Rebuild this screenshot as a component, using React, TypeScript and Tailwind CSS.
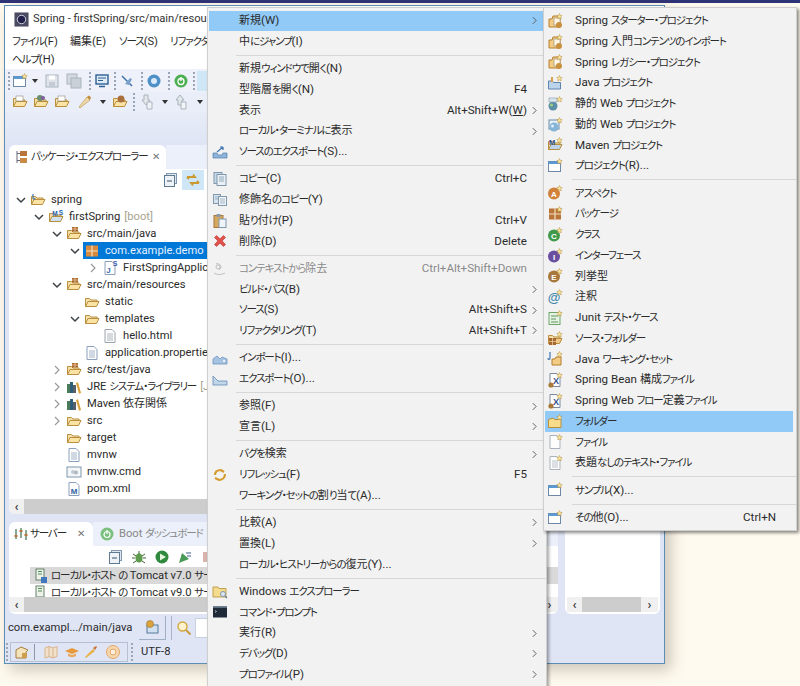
import React from "react";

const FONT = "font-['Roboto','Noto_Sans_CJK_JP',sans-serif] [font-feature-settings:'palt']";

// tiny star shown on the "new" wizard icons
const Star = () => <path d="M12.5 0.5l.8 1.9 1.9.2-1.4 1.3.4 2-1.7-1-1.7 1 .4-2-1.4-1.3 1.9-.2z" fill="#fbe7a0" stroke="#b08a3a" strokeWidth=".5" />;

const Folder = ({ c = "#fbe3a6" }: { c?: string }) => (
  <g strokeWidth="1" strokeLinejoin="round">
    <path d="M1.5 12.5v-8h4l1.5 1.5h6v2" fill="#f5dfa8" stroke="#b98f3e" />
    <path d="M1.5 12.5l2.5-5h11l-2.5 5z" fill={c} stroke="#b98f3e" />
  </g>
);
const Pkg = ({ c = "#d98a3d" }: { c?: string }) => (
  <g>
    <rect x="2" y="2.5" width="12" height="11" fill={c} />
    <path d="M2 8h12M8 2.5v11" stroke="#f6dfc0" strokeWidth="1.2" />
  </g>
);
const Doc = ({ lines = true, stroke = "#8ba0bc" }: { lines?: boolean; stroke?: string }) => (
  <g>
    <path d="M3 1.5h7l3 3v10H3z" fill="#fdfdfd" stroke={stroke} />
    {lines && <path d="M5 6h6M5 8h6M5 10h6M5 12h6" stroke={stroke} strokeWidth=".8" />}
  </g>
);
const Win = () => (
  <g>
    <rect x="1.5" y="3.5" width="12" height="10" fill="#fff" stroke="#6c8aa8" />
    <rect x="1.5" y="3.5" width="12" height="2.5" fill="#5b9bd5" />
  </g>
);
const Round = ({ c, t }: { c: string; t: string }) => (
  <g>
    <circle cx="7" cy="8.5" r="6" fill={c} />
    <text x="7" y="11.5" fontSize="8" fontWeight="700" textAnchor="middle" fill="#fff" fontFamily="Liberation Sans">{t}</text>
  </g>
);
const Books = () => (
  <g>
    <rect x="1" y="5" width="3" height="9" fill="#4a7c59" />
    <rect x="4" y="3" width="3" height="11" fill="#2f5f78" />
    <rect x="7" y="6" width="3" height="8" fill="#56606b" />
    <path d="M10 4l2-.7 3 10.700-2 .7z" fill="#d9a13b" />
  </g>
);
const Spring = () => (
  <g>
    <path d="M2 14V6h3l1-3h7v11z" fill="#f2cc85" stroke="#b57f2e" />
    <rect x="7" y="5" width="6" height="7" fill="#fff7e4" stroke="#8f8a7a" strokeWidth=".6" />
    <circle cx="12" cy="12" r="3" fill="#c9903e" />
    <Star />
  </g>
);
const Bean = () => (
  <g>
    <Doc lines={false} stroke="#7d8aa0" />
    <text x="9" y="12" fontSize="9" fontWeight="700" textAnchor="middle" fill="#38508c" fontFamily="Liberation Sans">X</text>
    <circle cx="4" cy="13" r="2.6" fill="#a9793a" />
    <Star />
  </g>
);

const ICONS: Record<string, React.ReactNode> = {
  folder: <Folder />,
  srcFolder: (<g><Folder /><rect x="6" y="1" width="6" height="4.500" fill="#a9682c" /><path d="M6 3h6M9 1v4.500" stroke="#f0d4ae" strokeWidth=".7" /></g>),
  pkg: <Pkg />,
  javaS: (<g><Doc lines={false} /><text x="6.500" y="13" fontSize="8" fontWeight="700" fill="#3c6cab" textAnchor="middle" fontFamily="Liberation Sans">J</text><text x="13" y="6" fontSize="7" fontWeight="700" fill="#3c5ca8" textAnchor="middle" fontFamily="Liberation Sans">S</text></g>),
  html: <Doc stroke="#9aa4ad" />,
  doc: <Doc />,
  cmdFile: (<g><rect x="1" y="3" width="14" height="10" fill="#f4f6f8" stroke="#7f98ad" /><circle cx="7" cy="8" r="2" fill="#c1cad2" /><circle cx="10" cy="8.500" r="2" fill="#aeb8c1" /></g>),
  pom: (<g><Doc lines={false} /><text x="8" y="13" fontSize="8" fontWeight="700" fill="#2f5ea3" textAnchor="middle" fontFamily="Liberation Sans">M</text></g>),
  books: <Books />,
  rootFolder: (<g><Folder /><path d="M3 2v4c0 1.500 2 1.500 2 0" stroke="#3f74ad" fill="none" strokeWidth="1.200" /></g>),
  mvnProject: (<g><Folder c="#cfe0f3" /><text x="7" y="7" fontSize="6.500" fontWeight="700" fill="#2b5fa5" textAnchor="middle" fontFamily="Liberation Sans">M</text><text x="13" y="6" fontSize="6.500" fontWeight="700" fill="#2b5fa5" textAnchor="middle" fontFamily="Liberation Sans">S</text></g>),
  // context menu
  export: (<g><path d="M1 14v-5h4l1 2h4l1-2h4v5z" fill="#8fb3d9" stroke="#4f7fae" strokeWidth=".7" /><path d="M5 8l6-5m0 0H8m3 0v3" stroke="#3f74ad" fill="none" strokeWidth="1.200" /></g>),
  import: (<g><path d="M1 14V9l4-3 3 3 2-2 5 2v5z" fill="#a6c4e2" stroke="#5f8bb6" strokeWidth=".7" /><circle cx="12" cy="11" r="1" fill="#fff" /></g>),
  export2: (<g><path d="M1 14V5l5 5h9v4z" fill="#c2d6ea" stroke="#5f8bb6" strokeWidth=".8" /></g>),
  copy: (<g><rect x="2" y="1.500" width="8" height="11" fill="#c9d7e6" stroke="#7f98ad" /><rect x="5" y="3.500" width="9" height="11" fill="#eaf0f6" stroke="#7f98ad" /><path d="M7 6h5M7 8h5M7 10h5" stroke="#7f98ad" strokeWidth=".8" /></g>),
  qcopy: (<g><rect x="1.500" y="2.500" width="7" height="9" fill="#d9e4ef" stroke="#7f98ad" /><rect x="6.500" y="4.500" width="8" height="9" fill="#f1f5f9" stroke="#7f98ad" /><path d="M3 5h4M3 7h4M8 7h5M8 9h5M8 11h5" stroke="#7f98ad" strokeWidth=".7" /></g>),
  paste: (<g><rect x="2" y="2.500" width="9" height="12" fill="#d6a760" stroke="#a2793a" /><rect x="4.500" y="1" width="4" height="3" fill="#8d9aa6" /><rect x="7" y="6" width="7" height="8.500" fill="#f0f4f8" stroke="#7f98ad" /></g>),
  del: <path d="M2.500 4.500l2-2L8 5.800l3.500-3.300 2 2L10.200 8l3.300 3.500-2 2L8 10.200l-3.500 3.300-2-2L5.800 8z" fill="#e2504a" stroke="#b9342f" strokeWidth=".6" />,
  remove: (<g fill="none" stroke="#bdbdbd"><path d="M4 3c3-1 5 1 5 4l-2 2M2 12c3 2 7 2 11 0" /><circle cx="6" cy="6" r="2" /></g>),
  refresh: (<g fill="none" stroke="#d69a2e" strokeWidth="2.200"><path d="M3 8c0-3 2-5 6-5l3 2" /><path d="M13 7c0 4-3 6-6 6l-4-2" /></g>),
  winExp: (<g><path d="M1 13V3h5l1 1.500h7V13z" fill="#f3dc8e" stroke="#c0a14f" /><circle cx="11" cy="10" r="2.500" fill="#dde8f2" stroke="#7f98ad" /><path d="M13 12l2 2" stroke="#6d7f90" strokeWidth="1.200" /></g>),
  prompt: (<g><rect x="1" y="2.500" width="14" height="11" fill="#1f2a38" /><rect x="1" y="2.500" width="14" height="1.500" fill="#5a7184" /><path d="M3 6.500l1.500 1L3 8.500" stroke="#d9dee3" fill="none" strokeWidth=".7" /></g>),
  // new wizard
  nSpring: <Spring />,
  nJava: (<g><path d="M1.500 14V6h4l1 1.500h7V14z" fill="#bcd3ec" stroke="#5e83ad" /><path d="M5 2v5" stroke="#d4a24a" strokeWidth="2" /><Star /></g>),
  nStatic: (<g><circle cx="6" cy="10" r="4.500" fill="#5d8fa8" /><rect x="2" y="2" width="8" height="4" fill="#dbe5ee" stroke="#7f98ad" strokeWidth=".6" /><circle cx="4.500" cy="9" r="1.500" fill="#9fd077" /><Star /></g>),
  nDynamic: (<g><rect x="2" y="3" width="10" height="9" fill="#e9f1f8" stroke="#6c8aa8" /><circle cx="7" cy="10" r="4.500" fill="#85b5d6" /><circle cx="5.500" cy="9" r="1.500" fill="#dff0ff" /><Star /></g>),
  nMaven: (<g><Folder c="#bcd3ec" /><text x="5" y="7.500" fontSize="7.500" fontWeight="700" fill="#2b4f9c" textAnchor="middle" fontFamily="Liberation Sans">M</text><Star /></g>),
  nProject: (<g><Win /><Star /></g>),
  nAspect: (<g><Round c="#d2813a" t="A" /><Star /></g>),
  nPkg: (<g><Pkg c="#b9743a" /><Star /></g>),
  nClass: (<g><Round c="#3f9a4c" t="C" /><Star /></g>),
  nIface: (<g><Round c="#6a4fa0" t="I" /><Star /></g>),
  nEnum: (<g><Round c="#a8773b" t="E" /><Star /></g>),
  nAnno: (<g><text x="7" y="13" fontSize="13" fontWeight="700" fill="#3f86ad" textAnchor="middle" fontFamily="Liberation Sans">@</text><Star /></g>),
  nJunit: (<g><rect x="2" y="2.500" width="11" height="12" fill="#e6f2e4" stroke="#6fa56a" /><path d="M4 6h7M4 9h5M4 12h7" stroke="#5c9456" /><Star /></g>),
  nSrc: (<g><Folder c="#f0c98a" /><rect x="2" y="7" width="7" height="7" fill="#a9682c" /><path d="M2 10.500h7M5.500 7v7" stroke="#f0d4ae" strokeWidth=".7" /><Star /></g>),
  nWs: (<g><path d="M3 1v6c0 2-2 2-2 0" stroke="#3f74ad" fill="none" strokeWidth="1.200" /><path d="M5 14V8h3l1-2h5v8z" fill="#f2cc85" stroke="#b57f2e" /><Star /></g>),
  nBean: <Bean />,
  nFolder: (<g><path d="M1.500 13.500v-8l5-1.500 1 1.500h6.500v8z" fill="#f7dc8c" stroke="#b98f3e" /><Star /></g>),
  nFile: (<g><Doc lines={false} stroke="#a9b3bd" /><Star /></g>),
  nText: (<g><Doc stroke="#a9b3bd" /><Star /></g>),
  // toolbars
  tbNew: (<g><Win /><Star /></g>),
  save: (<g><rect x="2" y="2" width="12" height="12" fill="#dfe4ea" stroke="#aab4bd" /><rect x="5" y="2.500" width="6" height="4" fill="#fff" /><rect x="5" y="9" width="6" height="5" fill="#c3ccd4" /></g>),
  saveAll: (<g><rect x="1" y="1" width="10" height="10" fill="#d3d9df" stroke="#aab4bd" /><rect x="5" y="5" width="10" height="10" fill="#c9d0d7" stroke="#aab4bd" /></g>),
  monitor: (<g><rect x="2" y="2" width="12" height="9" fill="#dfeaf5" stroke="#2c5f96" strokeWidth="1.400" /><path d="M4 5h8M4 7.500h5" stroke="#2c5f96" /><path d="M5 13.500h6" stroke="#2c5f96" strokeWidth="1.500" /></g>),
  noSkip: (<g><path d="M3 3l10 10" stroke="#3a6ea5" strokeWidth="1.400" /><path d="M6 11l5-6 2 1-3 6z" fill="#7aa2cc" /></g>),
  gear: (<g><circle cx="8" cy="8" r="6.500" fill="#4d8fc7" /><circle cx="8" cy="8" r="3" fill="#d9ebf8" /></g>),
  power: (<g><circle cx="8" cy="8" r="6.500" fill="#4caf50" /><circle cx="8" cy="8.500" r="3" fill="none" stroke="#fff" strokeWidth="1.300" /><path d="M8 4v4" stroke="#fff" strokeWidth="1.300" /></g>),
  oFolder: (<g><Folder /><rect x="4" y="2" width="7" height="5" fill="#fff" stroke="#8f8a7a" strokeWidth=".6" /></g>),
  oFolder2: (<g><Folder /><circle cx="7" cy="4" r="3" fill="#6b8e6f" /><circle cx="10" cy="4" r="2" fill="#7c5fa0" /></g>),
  pen: (<g><path d="M3 14l-1-1 8-10 3 3z" fill="#f0d7a5" stroke="#b0924f" strokeWidth=".6" /><path d="M10 3l2-1.500 2 2L13 6z" fill="#c08a3a" /></g>),
  oFolder3: (<g><Folder /><circle cx="9" cy="5" r="3.500" fill="#a8703c" /></g>),
  navDown: (<g><path d="M6 1h4v5h2l-4 5-4-5h2z" fill="#e4e8ec" stroke="#a9b3bd" /><path d="M9 8h5v7H9z" fill="#f1f4f6" stroke="#a9b3bd" /></g>),
  navUp: (<g><path d="M6 11h4V6h2L8 1 4 6h2z" fill="#e4e8ec" stroke="#a9b3bd" /><path d="M9 8h5v7H9z" fill="#f1f4f6" stroke="#a9b3bd" /></g>),
  collapse: (<g><rect x="3.500" y="1.500" width="10" height="10" fill="#dfe6ee" stroke="#7f98ad" /><rect x="1.500" y="3.500" width="10" height="11" fill="#eef2f6" stroke="#5e7a93" /><path d="M4 9h5" stroke="#33526e" strokeWidth="1.200" /></g>),
  link: (<g fill="none" stroke="#c9982f" strokeWidth="1.800"><path d="M2 5h8l-2-2.500M2 5l2 2" /><path d="M14 11H6l2 2.500M14 11l-2-2" /></g>),
  pkgView: (<g><path d="M3 2v12" stroke="#667" /><rect x="6" y="2" width="7" height="5" fill="#b9743a" /><rect x="6" y="9" width="7" height="5" fill="#c98a45" /><path d="M3 4.500h3M3 11.500h3" stroke="#667" /></g>),
  servers: (<g fill="none" stroke="#4c7a5a" strokeWidth="1.300"><path d="M3 3v10M8 2v10M13 4v10" /><path d="M1.500 10h3M6.500 5h3M11.500 9h3" stroke="#b9743a" strokeWidth="1.800" /></g>),
  boot: (<g><circle cx="8" cy="8" r="6.500" fill="#79c17c" /><circle cx="8" cy="8.500" r="3" fill="none" stroke="#fff" strokeWidth="1.200" /><path d="M8 4v4" stroke="#fff" strokeWidth="1.200" /></g>),
  bug: (<g><ellipse cx="8" cy="9" rx="3.500" ry="4.500" fill="#5e9b4c" /><path d="M2 5l3 2M14 5l-3 2M1 9h3M15 9h-3M2 14l3-2M14 14l-3-2M8 2v3" stroke="#42632f" /></g>),
  play: (<g><circle cx="8" cy="8" r="6.500" fill="#2f8a3d" /><path d="M6 4.500l6 3.500-6 3.500z" fill="#e5f5dd" /></g>),
  profile: (<g><path d="M2 14l3-10 7 6z" fill="#4a9a57" /><path d="M9 4h5M10 7h4" stroke="#3a5f8c" /></g>),
  stop: <rect x="3" y="3" width="10" height="10" fill="#d9b3ae" />,
  server: (<g><rect x="3" y="1" width="8" height="11" fill="#edf2e9" stroke="#66806a" /><path d="M5 3.500h4M5 6h4" stroke="#4c8a5a" /><rect x="8" y="9" width="6" height="6" fill="#3f78bd" /></g>),
  server2: (<g><rect x="3" y="1" width="8" height="11" fill="#edf2e9" stroke="#66806a" /><path d="M5 3.500h4M5 6h4" stroke="#4c8a5a" /></g>),
  showIn: (<g><rect x="3" y="6" width="11" height="8" fill="#cfe0f0" stroke="#58799a" /><circle cx="6" cy="5" r="3.500" fill="#dba33d" stroke="#9b702a" strokeWidth=".6" /></g>),
  search: (<g><circle cx="6.500" cy="6.500" r="4.500" fill="#fff3cf" stroke="#d4a640" strokeWidth="1.400" /><path d="M10 10l4.500 4.500" stroke="#c99a3a" strokeWidth="1.800" /></g>),
  hat: (<g><path d="M2 14V6l5-3 7 3-2 2v6z" fill="#f5e3bc" stroke="#a37f3d" /><rect x="8" y="9" width="5" height="5" fill="#cf9d4e" /></g>),
  map: <path d="M2 4l4-1.500 4 1.500 4-1.500v10l-4 1.500-4-1.500-4 1.500zM6 2.500v10M10 4v10" fill="#f2e1cc" stroke="#d9b48d" />,
  cap: (<g><path d="M1 7l7-3 7 3-7 3z" fill="#e79a3b" /><path d="M4 9.500v2.500c2 1.500 6 1.500 8 0V9.500L8 11z" fill="#e9a95a" /></g>),
  wand: (<g><path d="M3 14l-1-1 8-8 2 2z" fill="#e9b048" /><path d="M10 4l3-2 1 1-2 3z" fill="#c9743a" /></g>),
  badge: (<g><circle cx="8" cy="8" r="6.500" fill="#f6d7b0" stroke="#e3a668" /><circle cx="8" cy="8" r="3" fill="#fbeedd" stroke="#e3a668" /></g>),
};

const Icon = ({ name, className = "" }: { name: string; className?: string }) => (
  <svg viewBox="0 0 16 16" className={`w-4 h-4 shrink-0 ${className}`}>{ICONS[name]}</svg>
);

function T({ s }: { s: string }) {
  const parts = s.split(/([\u3040-\u30ff]+|[\u4e00-\u9fff]+)/);
  return (
    <>
      {parts.map((p, i) => {
        if (i % 2 === 0) return <React.Fragment key={i}>{p}</React.Fragment>;
        const kana = /^[\u3040-\u30ff]/.test(p);
        return <span key={i} className={kana ? "text-[10.500px] tracking-[-1.1px]" : "text-[11px]"}>{p}</span>;
      })}
    </>
  );
}

const Chevron = ({ open }: { open?: boolean }) => (
  <svg viewBox="0 0 10 10" className="w-[10px] h-[10px]">
    {open
      ? <path d="M1 3l4 4 4-4" fill="none" stroke="#3d4247" strokeWidth="1.500" />
      : <path d="M3 1l4 4-4 4" fill="none" stroke="#9a9a9a" strokeWidth="1.200" />}
  </svg>
);

const Caret = ({ className = "" }: { className?: string }) => (
  <span className={`mx-[3px] w-0 h-0 shrink-0 border-x-[3px] border-x-transparent border-t-[4px] border-t-[#333] ${className}`} />
);
const Dots = ({ className = "" }: { className?: string }) => (
  <span className={`mx-[2px] h-[18px] w-[2px] shrink-0 border-l-2 border-dotted border-[#9aa5b8] ${className}`} />
);

type Row = { pl: string; text: string; note?: string; icon: string; arrow?: "open" | "closed"; sel?: boolean };

const TREE: Row[] = [
  { pl: "pl-[3px]", text: "spring", icon: "rootFolder", arrow: "open" },
  { pl: "pl-[21px]", text: "firstSpring", note: "[boot]", icon: "mvnProject", arrow: "open" },
  { pl: "pl-[39px]", text: "src/main/java", icon: "srcFolder", arrow: "open" },
  { pl: "pl-[57px]", text: "com.example.demo", icon: "pkg", arrow: "open", sel: true },
  { pl: "pl-[75px]", text: "FirstSpringApplic", icon: "javaS", arrow: "closed" },
  { pl: "pl-[39px]", text: "src/main/resources", icon: "srcFolder", arrow: "open" },
  { pl: "pl-[57px]", text: "static", icon: "folder" },
  { pl: "pl-[57px]", text: "templates", icon: "folder", arrow: "open" },
  { pl: "pl-[75px]", text: "hello.html", icon: "html" },
  { pl: "pl-[57px]", text: "application.propertie", icon: "doc" },
  { pl: "pl-[39px]", text: "src/test/java", icon: "srcFolder", arrow: "closed" },
  { pl: "pl-[39px]", text: "JRE システム・ライブラリー", note: "[Ja", icon: "books", arrow: "closed" },
  { pl: "pl-[39px]", text: "Maven 依存関係", icon: "books", arrow: "closed" },
  { pl: "pl-[39px]", text: "src", icon: "folder", arrow: "closed" },
  { pl: "pl-[39px]", text: "target", icon: "folder" },
  { pl: "pl-[39px]", text: "mvnw", icon: "doc" },
  { pl: "pl-[39px]", text: "mvnw.cmd", icon: "cmdFile" },
  { pl: "pl-[39px]", text: "pom.xml", icon: "pom" },
];

type Item = { t: string; icon?: string; key?: string; sub?: boolean; sel?: boolean; off?: boolean } | "sep";

const MAIN_MENU: Item[] = [
  { t: "新規(W)", sub: true, sel: true },
  { t: "中にジャンプ(I)" },
  "sep",
  { t: "新規ウィンドウで開く(N)" },
  { t: "型階層を開く(N)", key: "F4" },
  { t: "表示", key: "Alt+Shift+W(W)", sub: true },
  { t: "ローカル・ターミナルに表示", sub: true },
  { t: "ソースのエクスポート(S)...", icon: "export" },
  "sep",
  { t: "コピー(C)", icon: "copy", key: "Ctrl+C" },
  { t: "修飾名のコピー(Y)", icon: "qcopy" },
  { t: "貼り付け(P)", icon: "paste", key: "Ctrl+V" },
  { t: "削除(D)", icon: "del", key: "Delete" },
  "sep",
  { t: "コンテキストから除去", icon: "remove", key: "Ctrl+Alt+Shift+Down", off: true },
  { t: "ビルド・パス(B)", sub: true },
  { t: "ソース(S)", key: "Alt+Shift+S", sub: true },
  { t: "リファクタリング(T)", key: "Alt+Shift+T", sub: true },
  "sep",
  { t: "インポート(I)...", icon: "import" },
  { t: "エクスポート(O)...", icon: "export2" },
  "sep",
  { t: "参照(F)", sub: true },
  { t: "宣言(L)", sub: true },
  "sep",
  { t: "バグを検索", sub: true },
  { t: "リフレッシュ(F)", icon: "refresh", key: "F5" },
  { t: "ワーキング・セットの割り当て(A)..." },
  "sep",
  { t: "比較(A)", sub: true },
  { t: "置換(L)", sub: true },
  { t: "ローカル・ヒストリーからの復元(Y)..." },
  "sep",
  { t: "Windows エクスプローラー", icon: "winExp" },
  { t: "コマンド・プロンプト", icon: "prompt" },
  { t: "実行(R)", sub: true },
  { t: "デバッグ(D)", sub: true },
  { t: "プロファイル(P)", sub: true },
];

const NEW_MENU: Item[] = [
  { t: "Spring スターター・プロジェクト", icon: "nSpring" },
  { t: "Spring 入門コンテンツのインポート", icon: "nSpring" },
  { t: "Spring レガシー・プロジェクト", icon: "nSpring" },
  { t: "Java プロジェクト", icon: "nJava" },
  { t: "静的 Web プロジェクト", icon: "nStatic" },
  { t: "動的 Web プロジェクト", icon: "nDynamic" },
  { t: "Maven プロジェクト", icon: "nMaven" },
  { t: "プロジェクト(R)...", icon: "nProject" },
  "sep",
  { t: "アスペクト", icon: "nAspect" },
  { t: "パッケージ", icon: "nPkg" },
  { t: "クラス", icon: "nClass" },
  { t: "インターフェース", icon: "nIface" },
  { t: "列挙型", icon: "nEnum" },
  { t: "注釈", icon: "nAnno" },
  { t: "Junit テスト・ケース", icon: "nJunit" },
  { t: "ソース・フォルダー", icon: "nSrc" },
  { t: "Java ワーキング・セット", icon: "nWs" },
  { t: "Spring Bean 構成ファイル", icon: "nBean" },
  { t: "Spring Web フロー定義ファイル", icon: "nBean" },
  { t: "フォルダー", icon: "nFolder", sel: true },
  { t: "ファイル", icon: "nFile" },
  { t: "表題なしのテキスト・ファイル", icon: "nText" },
  "sep",
  { t: "サンプル(X)...", icon: "nProject" },
  "sep",
  { t: "その他(O)...", icon: "nProject", key: "Ctrl+N" },
];

function KeyText({ k }: { k: string }) {
  // the Show In shortcut has its mnemonic underlined
  if (k.endsWith("(W)")) {
    return <span>{k.slice(0, -3)}(<span className="underline">W</span>)</span>;
  }
  return <span>{k}</span>;
}

function MenuRows({ items, iconCol, arrowCol }: { items: Item[]; iconCol: string; arrowCol: string }) {
  return (
    <>
      {items.map((it, i) =>
        it === "sep" ? (
          <div key={i} className="h-[6.5px] flex items-center">
            <div className="h-px w-full bg-[#d7d7d7] ml-[28px]" />
          </div>
        ) : (
          <div
            key={i}
            className={`h-[20.75px] flex items-center ml-px mr-[3px] ${it.sel ? "bg-[#91c9f7]" : ""} ${it.off ? "text-[#8a8a8a]" : "text-[#2b2b2b]"}`}
          >
            <span className={`flex justify-center shrink-0 ${iconCol}`}>
              {it.icon && <Icon name={it.icon} />}
            </span>
            <span className="whitespace-nowrap"><T s={it.t} /></span>
            {it.key && <span className="ml-auto whitespace-nowrap"><KeyText k={it.key} /></span>}
            <span className={`shrink-0 flex pl-[5px] ${arrowCol} ${it.key ? "" : "ml-auto"}`}>
              {it.sub && (
                <svg viewBox="0 0 6 10" className="w-[5px] h-[9px]">
                  <path d="M1 1l4 4-4 4" fill="none" stroke="#555" strokeWidth="1.100" />
                </svg>
              )}
            </span>
          </div>
        )
      )}
    </>
  );
}

function ScrollBar({ className = "" }: { className?: string }) {
  return (
    <div className={`h-[15px] shrink-0 bg-[#f0f0f0] flex items-center ${className}`}>
      <span className="w-[15px] text-center text-[13px] font-bold leading-none text-[#444]">‹</span>
      <div className="flex-1 h-full bg-[#cdcdcd]" />
      <span className="w-[17px] text-center text-[13px] font-bold leading-none text-[#444]">›</span>
    </div>
  );
}

export default function App() {
  return (
    <div className={`relative w-[800px] h-[686px] overflow-hidden bg-[#fffaef] text-[11.200px] leading-none text-[#2b2b2b] ${FONT}`}>
      <div className="h-[3px] bg-[#2f3378]" />

      {/* eclipse window */}
      <div className="ml-[4px] mt-[2px] w-[661px] h-[659px] flex flex-col border border-[#5c8db5] bg-[#dfe5f5] shadow-[6px_6px_14px_rgba(90,80,60,0.3)]">
        <div className="h-[26px] shrink-0 bg-white flex items-center pl-[9px] gap-[4px]">
          <svg viewBox="0 0 16 16" className="w-[15px] h-[15px] shrink-0">
            <rect x="0.500" y="0.500" width="15" height="15" fill="#4a4a63" />
            <circle cx="8" cy="8" r="4.500" fill="#20204a" stroke="#d9d9e6" />
          </svg>
          <span className="text-[#333] whitespace-nowrap">Spring - firstSpring/src/main/resou</span>
        </div>
        <div className="h-[19px] shrink-0 bg-white flex items-center pl-[7px] whitespace-nowrap">
          <span className="w-[58px]"><T s="ファイル(F)" /></span>
          <span className="w-[49px]"><T s="編集(E)" /></span>
          <span className="w-[51px]"><T s="ソース(S)" /></span>
          <span><T s="リファクタ" /></span>
        </div>
        <div className="h-[18px] shrink-0 bg-white flex items-center pl-[7px]"><T s="ヘルプ(H)" /></div>
        <div className="h-[23px] shrink-0 bg-[#eef1f9] flex items-center pl-px">
          <Dots />
          <Icon name="tbNew" />
          <Caret className="ml-[4px]" />
          <Icon name="save" className="ml-[3px]" />
          <Icon name="saveAll" className="ml-[6px]" />
          <Dots className="ml-[7px]" />
          <Icon name="monitor" className="ml-[1px]" />
          <Dots className="ml-[4px]" />
          <Icon name="noSkip" className="ml-[1px]" />
          <Dots className="ml-[6px]" />
          <Icon name="gear" className="ml-[1px]" />
          <Dots className="ml-[6px]" />
          <Icon name="power" className="ml-[1px]" />
          <Dots className="ml-[4px]" />
          <span className="w-[12px] h-[20px] bg-[#cfe6f7]" />
        </div>
        <div className="h-[20px] shrink-0 bg-[#eaeef8] flex items-center pl-[7px]">
          <Icon name="oFolder" />
          <Icon name="oFolder2" className="ml-[5px]" />
          <Icon name="oFolder" className="ml-[5px]" />
          <Icon name="pen" className="ml-[7px]" />
          <Caret className="ml-[7px]" />
          <Icon name="oFolder3" className="ml-[3px]" />
          <Dots className="ml-[5px]" />
          <Icon name="navDown" className="ml-[1px]" />
          <Caret className="ml-[8px]" />
          <Icon name="navUp" className="ml-[1px]" />
          <Caret className="ml-[9px]" />
        </div>
        <div className="h-[33px] shrink-0 bg-gradient-to-b from-[#e8ecf8] to-[#dfe5f5]" />

        <div className="h-[469px] shrink-0 flex pl-[4px] gap-[7px]">
          <div className="w-[549px] flex flex-col">
            {/* package explorer */}
            <div className="h-[369px] flex flex-col">
              <div className="h-[24px] shrink-0 flex">
                <div className="w-[157px] rounded-t-[6px] bg-white flex items-center pl-[5px] whitespace-nowrap">
                  <Icon name="pkgView" />
                  <span className="ml-[1px]"><T s="パッケージ・エクスプローラー" /></span>
                  <span className="text-[10px] text-[#777] ml-auto mr-[6px]">✕</span>
                </div>
                <div className="flex-1 bg-[#ecf0fa] rounded-tr-[6px]" />
              </div>
              <div className="flex-1 bg-white rounded-b-[6px] flex flex-col overflow-hidden">
                <div className="h-[22px] shrink-0 flex items-center pl-[154px] gap-[3px]">
                  <Icon name="collapse" />
                  <span className="w-[22px] h-[20px] bg-[#cfe6f7] flex items-center justify-center"><Icon name="link" /></span>
                </div>
                <div className="h-[306px] shrink-0 overflow-hidden">
                  {TREE.map((r) => (
                    <div key={r.text} className={`h-[17px] flex items-center whitespace-nowrap ${r.pl}`}>
                      <span className="w-[17px] flex justify-center shrink-0">
                        {r.arrow && <Chevron open={r.arrow === "open"} />}
                      </span>
                      <span className={`flex-1 flex items-center h-[17px] pl-[1px] ${r.sel ? "bg-[#0078d7] text-[#e4f1ff]" : ""}`}>
                        <Icon name={r.icon} />
                        <span className="ml-[5px]"><T s={r.text} /></span>
                        {r.note && <span className="ml-[4px] text-[#a8a38f]">{r.note}</span>}
                      </span>
                    </div>
                  ))}
                </div>
                <ScrollBar className="mt-[2px]" />
              </div>
            </div>
            <div className="h-[8px] shrink-0" />
            {/* servers */}
            <div className="h-[92px] flex flex-col">
              <div className="h-[24px] shrink-0 flex">
                <div className="w-[84px] rounded-t-[6px] bg-white flex items-center pl-[4px] gap-[1px]">
                  <Icon name="servers" />
                  <span><T s="サーバー" /></span>
                  <span className="text-[10px] text-[#777] ml-auto mr-[8px]">✕</span>
                </div>
                <div className="flex-1 bg-[#ecf0fa] rounded-tr-[6px] flex items-center pl-[6px] gap-[4px] text-[#888] whitespace-nowrap">
                  <Icon name="boot" />
                  <span><T s="Boot ダッシュボード" /></span>
                </div>
              </div>
              <div className="flex-1 bg-white rounded-b-[6px] flex flex-col overflow-hidden">
                <div className="h-[21px] shrink-0 flex items-center pl-[99px] gap-[7px]">
                  <Icon name="collapse" /><Icon name="bug" /><Icon name="play" /><Icon name="profile" /><Icon name="stop" />
                </div>
                <div className="h-[30px] shrink-0 overflow-hidden pl-[21px] whitespace-nowrap">
                  <div className="h-[17px] bg-[#d9d9d9] flex items-center gap-[2px] pl-[3px]"><Icon name="server" /><span><T s="ローカル・ホスト の Tomcat v7.0 サー" /></span></div>
                  <div className="h-[17px] flex items-center gap-[2px] pl-[3px]"><Icon name="server2" /><span><T s="ローカル・ホスト の Tomcat v9.0 サー" /></span></div>
                </div>
                <ScrollBar />
              </div>
            </div>
          </div>
          {/* right column, mostly behind the menu */}
          <div className="w-[95px] flex flex-col">
            <div className="h-[377px] shrink-0" />
            <div className="h-[92px] bg-white rounded-b-[6px] flex flex-col justify-end pb-[2px]">
              <ScrollBar className="mx-[2px]" />
            </div>
          </div>
        </div>

        <div className="h-[27px] shrink-0 flex items-center pl-[3px] gap-[2px]">
          <span className="w-[129px] whitespace-nowrap">com.exampl.../main/java</span>
          <span className="w-[27px] h-[24px] flex items-center justify-center border-r border-b border-[#9fb0c6]"><Icon name="showIn" /></span>
          <span className="ml-[3px] h-[24px] w-px bg-[#a9b4c9]" />
          <Icon name="search" className="ml-[2px]" />
          <span className="w-[40px] h-[20px] bg-white border border-[#c8cfe0] ml-[1px]" />
        </div>
        <div className="flex-1 flex items-center">
          <Dots className="ml-px" />
          <div className="h-[20px] w-[118px] shrink-0 flex items-center border border-[#b6c0d2] pl-[3px]">
            <Icon name="hat" />
            <span className="ml-[4px] h-[16px] w-px bg-[#8d97aa]" />
            <Icon name="map" className="ml-[8px]" />
            <Icon name="cap" className="ml-[5px]" />
            <Icon name="wand" className="ml-[3px]" />
            <Icon name="badge" className="ml-[6px]" />
          </div>
          <Dots className="ml-[3px]" />
          <span className="ml-[6px]">UTF-8</span>
        </div>
      </div>

      {/* context menu */}
      <div className="absolute left-[207px] top-[7px] w-[340px] h-[690px] bg-[#f2f2f2] border border-[#cfcfcf] shadow-[2px_2px_3px_rgba(0,0,0,0.35)] pt-[2.500px] text-[11.600px]">
        <MenuRows items={MAIN_MENU} iconCol="w-[22px] mr-[8px]" arrowCol="w-[16px]" />
      </div>

      {/* new submenu */}
      <div className="absolute left-[543px] top-[7px] w-[254px] h-[524px] bg-[#f2f2f2] border border-[#cfcfcf] shadow-[2px_2px_3px_rgba(0,0,0,0.45)] pt-[2.500px] text-[11.600px]">
        <MenuRows items={NEW_MENU} iconCol="w-[20px] mr-[10px]" arrowCol="w-[17px]" />
      </div>
    </div>
  );
}
